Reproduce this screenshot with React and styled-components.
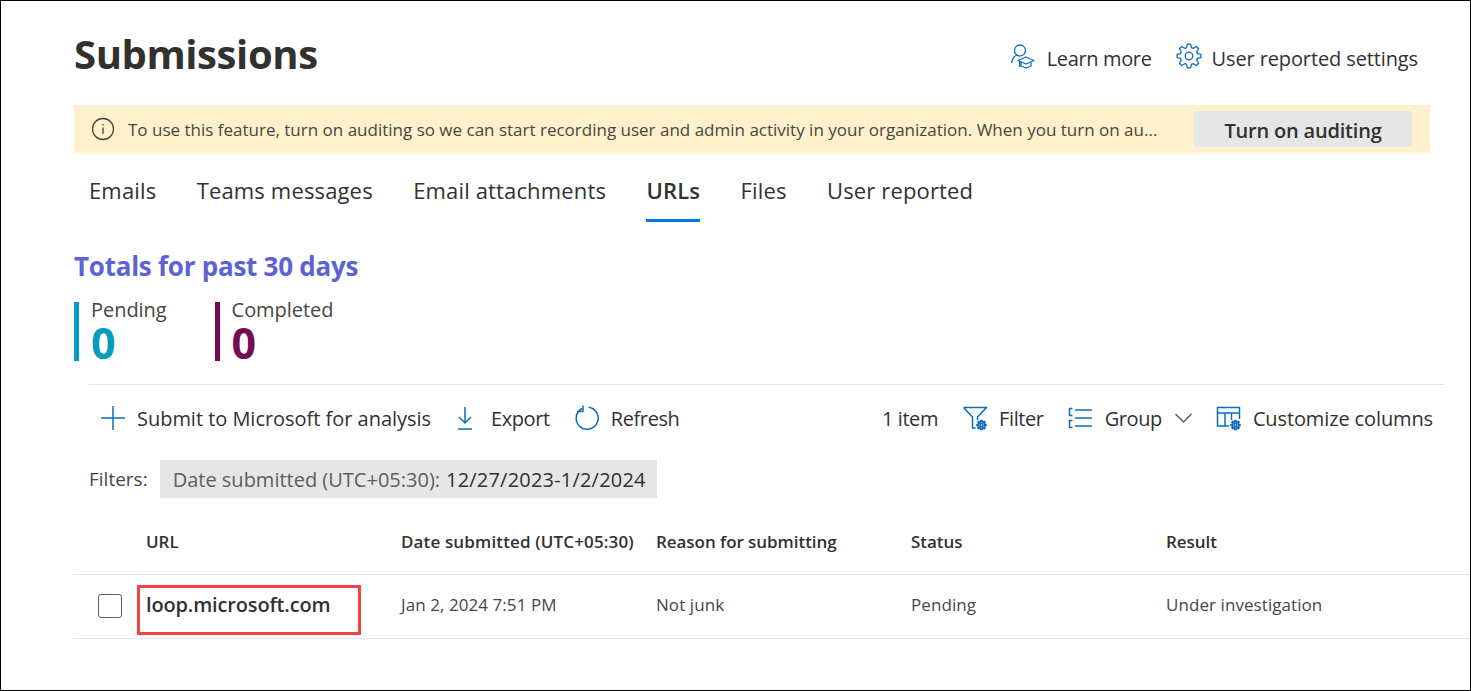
import styled, { createGlobalStyle } from "styled-components"

const GlobalStyle = createGlobalStyle`
  html, body { margin: 0; padding: 0; background: #fff; }
  body { font-family: "Open Sans", "Noto Sans", sans-serif; color: #323130; }
`

const Page = styled.div`
  box-sizing: border-box;
  width: 1471px;
  height: 691px;
  border: 1px solid #000;
  padding: 0 0 0 72px;
  overflow: hidden;
`

const Header = styled.header`
  display: flex;
  align-items: center;
  justify-content: space-between;
  height: 104px;
  padding: 0 52px 0 1px;
`

const Title = styled.h1`
  margin: 0;
  font-size: 40px;
  font-weight: 700;
  letter-spacing: -0.4px;
  color: #323130;
`

const HeaderLinks = styled.div`
  display: flex;
  align-items: center;
  gap: 24px;
  margin-top: 10px;
`

const HeaderLink = styled.a`
  display: flex;
  align-items: center;
  gap: 10px;
  font-size: 20px;
  letter-spacing: ${({ $ls }) => $ls}px;
  color: #323130;
`

const Banner = styled.div`
  display: flex;
  align-items: center;
  box-sizing: border-box;
  width: 1356px;
  height: 48px;
  margin-left: 1px;
  padding: 0 18px 0 17px;
  background: #fff1cc;
  font-size: 17px;
  color: #484644;
`

const BannerText = styled.span`
  flex: 1;
  margin-left: 13px;
  white-space: nowrap;
`

const BannerButton = styled.button`
  width: 218px;
  height: 36px;
  padding: 2px 0 0;
  border: 0;
  border-radius: 2px;
  background: #e6e6e6;
  font-family: inherit;
  font-size: 20px;
  font-weight: 600;
  letter-spacing: -0.2px;
  color: #323130;
`

const Tabs = styled.nav`
  display: flex;
  gap: 40.4px;
  height: 69px;
  padding-left: 16px;
`

const Tab = styled.div`
  position: relative;
  padding-top: 22px;
  font-size: 22px;
  font-weight: ${({ $active }) => ($active ? 600 : 400)};
  letter-spacing: 0.15px;
  color: #323130;
  ${({ $active }) =>
    $active &&
    `&::after {
      content: "";
      position: absolute;
      left: 0;
      right: 0;
      top: 66px;
      height: 3px;
      background: #0078d4;
    }`}
`

const Totals = styled.h2`
  margin: 24px 0 0 1px;
  font-size: 26px;
  line-height: 40px;
  font-weight: 700;
  letter-spacing: -0.25px;
  color: #5b63d3;
`

const Kpis = styled.div`
  display: flex;
  gap: 48px;
  margin: 16px 0 0 1px;
`

const Kpi = styled.div`
  box-sizing: border-box;
  height: 59px;
  padding-left: 12px;
  border-left: 5px solid ${({ $color }) => $color};
  color: ${({ $color }) => $color};
`

const KpiLabel = styled.div`
  margin-top: -2px;
  font-size: 20px;
  line-height: 20px;
  letter-spacing: -0.05px;
  color: #484644;
`

const KpiValue = styled.div`
  margin-top: 5px;
  font-size: 43px;
  line-height: 36px;
  font-weight: 700;
`

const Toolbar = styled.div`
  display: flex;
  align-items: center;
  justify-content: space-between;
  height: 67px;
  margin: 23px 25px 0 16px;
  border-top: 1px solid #e6e6e6;
  padding: 0 12px 2px 12px;
`

const ToolGroup = styled.div`
  display: flex;
  align-items: center;
  gap: ${({ $gap }) => $gap}px;
`

const Tool = styled.div`
  display: flex;
  align-items: center;
  gap: ${({ $gap }) => $gap ?? 11}px;
  font-size: 20px;
  letter-spacing: ${({ $ls }) => $ls ?? -0.4}px;
  color: #323130;

  svg {
    margin-top: -2px;
    stroke-width: 1.5;
  }
`

const FilterRow = styled.div`
  display: flex;
  align-items: center;
  gap: 12px;
  height: 38px;
  margin: 6px 0 0 16px;
  font-size: 19px;
  color: #484644;
`

const FilterPill = styled.div`
  display: flex;
  align-items: center;
  gap: 6px;
  height: 38px;
  padding: 0 11px 0 13px;
  background: #e6e6e6;
  font-size: 20px;
  color: #605e5c;
`

const FilterValue = styled.span`
  letter-spacing: 0.2px;
  color: #323130;
`

const TableRow = styled.div`
  display: grid;
  box-sizing: border-box;
  grid-template-columns: 73px 255px 255px 255px 255px 1fr;
  align-items: center;
  height: ${({ $h }) => $h}px;
  padding: ${({ $pad }) => $pad};
  border-bottom: 1px solid #e6e6e6;
  font-size: 17px;
  letter-spacing: 0.07px;
  color: #484644;
`

const HeadCell = styled.div`
  font-weight: 600;
  letter-spacing: ${({ $ls }) => $ls ?? -0.05}px;
  white-space: nowrap;
  color: #323130;
`

const CheckCell = styled.div`
  display: flex;
  justify-content: flex-end;
  padding: 2px 24px 0 0;
`

const Check = styled.span`
  display: block;
  box-sizing: border-box;
  width: 24px;
  height: 24px;
  border: 1px solid #605e5c;
  border-radius: 3px;
`

const UrlCell = styled.div`
  position: relative;
  font-size: 20px;
  font-weight: 600;
  letter-spacing: -0.15px;
  color: #323130;
`

const Highlight = styled.span`
  position: absolute;
  left: -9px;
  top: -6px;
  width: 224px;
  height: 50px;
  box-sizing: border-box;
  border: 3px solid #ef4444;
`

const Svg = styled.svg`
  display: block;
  flex: none;
  fill: none;
  overflow: visible;
  stroke: ${({ $stroke }) => $stroke ?? "#0f6cbd"};
  stroke-width: 1.3;
  stroke-linejoin: round;
`

// n-lobed gear outline, used by the settings icon and the small badge gears
function gearPath(cx, cy, outer, inner, n = 8) {
  const step = (Math.PI * 2) / n
  const pts = []
  for (let i = 0; i < n; i++) {
    const a = i * step
    const at = (r, da) => `${(cx + r * Math.cos(a + da)).toFixed(2)} ${(cy + r * Math.sin(a + da)).toFixed(2)}`
    pts.push(at(inner, -step * 0.36), at(outer, -step * 0.17), at(outer, step * 0.17), at(inner, step * 0.36))
  }
  return `M${pts.join("L")}Z`
}

const InfoIcon = () => (
  <Svg width="24" height="24" viewBox="0 0 24 24" $stroke="#484644">
    <circle cx="12" cy="12" r="10.5" />
    <path d="M12 10.5v6.5M12 7v1.5" />
  </Svg>
)

const LearnIcon = () => (
  <Svg width="26" height="26" viewBox="0 6 26 26">
    <circle cx="9" cy="11.500" r="5.500" />
    <path d="M.7 24c.4-4.500 2.500-7 5.300-8M7 21.500l8-3.500 8 3.500-8 3.500zM10 23.500v3.500l5 2 5-2v-3.500M8.500 22v6" />
  </Svg>
)

const GearIcon = () => (
  <Svg width="26" height="26" viewBox="0 2 26 26">
    <circle cx="13" cy="13" r="3.800" />
    <path d={gearPath(13, 13, 12, 8.800)} />
  </Svg>
)

const PlusIcon = () => (
  <Svg width="24" height="24" viewBox="0 0 24 24">
    <path d="M12 0v24M0 12h24" />
  </Svg>
)

const ExportIcon = () => (
  <Svg width="20" height="24" viewBox="0 0 20 24">
    <path d="M10 1v16M4 11l6 6 6-6M3 23h14" />
  </Svg>
)

const RefreshIcon = () => (
  <Svg width="24" height="26" viewBox="0 0 24 26">
    <path d="M14.500 2.300A11 11 0 1 1 8 3.500M9 .5v6H3" />
  </Svg>
)

const FilterIcon = () => (
  <Svg width="26" height="24" viewBox="0 0 26 24">
    <path d="M1.500 1.500h23l-9 9.500v3M1.500 1.500l9 9.500V22h3" />
    <circle cx="19.500" cy="19" r="1.500" />
    <path d={gearPath(19.500, 19, 4.600, 3)} />
  </Svg>
)

const GroupIcon = () => (
  <Svg width="24" height="22" viewBox="0 0 24 22">
    <path d="M7 3h17M7 11h17M7 19h17M4.500 1.500h-3v7h3M4.500 13.500h-3v7h3" />
  </Svg>
)

const ChevronIcon = () => (
  <Svg width="17" height="18" viewBox="0 0 17 18" $stroke="#605e5c">
    <path d="M.5 5l8 8 8-8" />
  </Svg>
)

const ColumnsIcon = () => (
  <Svg width="26" height="24" viewBox="0 0 26 24">
    <path d="M13 20H1.500V1.500h22V13M1.500 7h22M9 7v13M15.500 7v7" />
    <circle cx="19.500" cy="19" r="1.500" />
    <path d={gearPath(19.500, 19, 4.600, 3)} />
  </Svg>
)

export default function App() {
  return (
    <Page>
      <GlobalStyle />
      <Header>
        <Title>Submissions</Title>
        <HeaderLinks>
          <HeaderLink $ls={-0.35}><LearnIcon />Learn more</HeaderLink>
          <HeaderLink $ls={-0.12}><GearIcon />User reported settings</HeaderLink>
        </HeaderLinks>
      </Header>

      <Banner>
        <InfoIcon />
        <BannerText>
          To use this feature, turn on auditing so we can start recording user and admin activity in your organization. When you turn on au...
        </BannerText>
        <BannerButton>Turn on auditing</BannerButton>
      </Banner>

      <Tabs>
        <Tab>Emails</Tab>
        <Tab>Teams messages</Tab>
        <Tab>Email attachments</Tab>
        <Tab $active>URLs</Tab>
        <Tab>Files</Tab>
        <Tab>User reported</Tab>
      </Tabs>

      <Totals>Totals for past 30 days</Totals>
      <Kpis>
        <Kpi $color="#009dbf">
          <KpiLabel>Pending</KpiLabel>
          <KpiValue>0</KpiValue>
        </Kpi>
        <Kpi $color="#750b52">
          <KpiLabel>Completed</KpiLabel>
          <KpiValue>0</KpiValue>
        </Kpi>
      </Kpis>

      <Toolbar>
        <ToolGroup $gap={24}>
          <Tool $gap={12} $ls={-0.03}><PlusIcon />Submit to Microsoft for analysis</Tool>
          <Tool $gap={16}><ExportIcon />Export</Tool>
          <Tool $gap={13}><RefreshIcon />Refresh</Tool>
        </ToolGroup>
        <ToolGroup $gap={24}>
          <Tool>1 item</Tool>
          <Tool><FilterIcon />Filter</Tool>
          <Tool $gap={13}>
            <GroupIcon />Group<ChevronIcon />
          </Tool>
          <Tool $ls={-0.12}><ColumnsIcon />Customize columns</Tool>
        </ToolGroup>
      </Toolbar>

      <FilterRow>
        Filters:
        <FilterPill>
          Date submitted (UTC+05:30): <FilterValue>12/27/2023-1/2/2024</FilterValue>
        </FilterPill>
      </FilterRow>

      <TableRow $h={77} $pad="10px 0 0">
        <div />
        <HeadCell>URL</HeadCell>
        <HeadCell $ls={0.14}>Date submitted (UTC+05:30)</HeadCell>
        <HeadCell>Reason for submitting</HeadCell>
        <HeadCell>Status</HeadCell>
        <HeadCell>Result</HeadCell>
      </TableRow>
      <TableRow $h={64} $pad="0 0 4px">
        <CheckCell><Check /></CheckCell>
        <UrlCell>
          loop.microsoft.com
          <Highlight />
        </UrlCell>
        <div>Jan 2, 2024 7:51 PM</div>
        <div>Not junk</div>
        <div>Pending</div>
        <div>Under investigation</div>
      </TableRow>
    </Page>
  )
}
